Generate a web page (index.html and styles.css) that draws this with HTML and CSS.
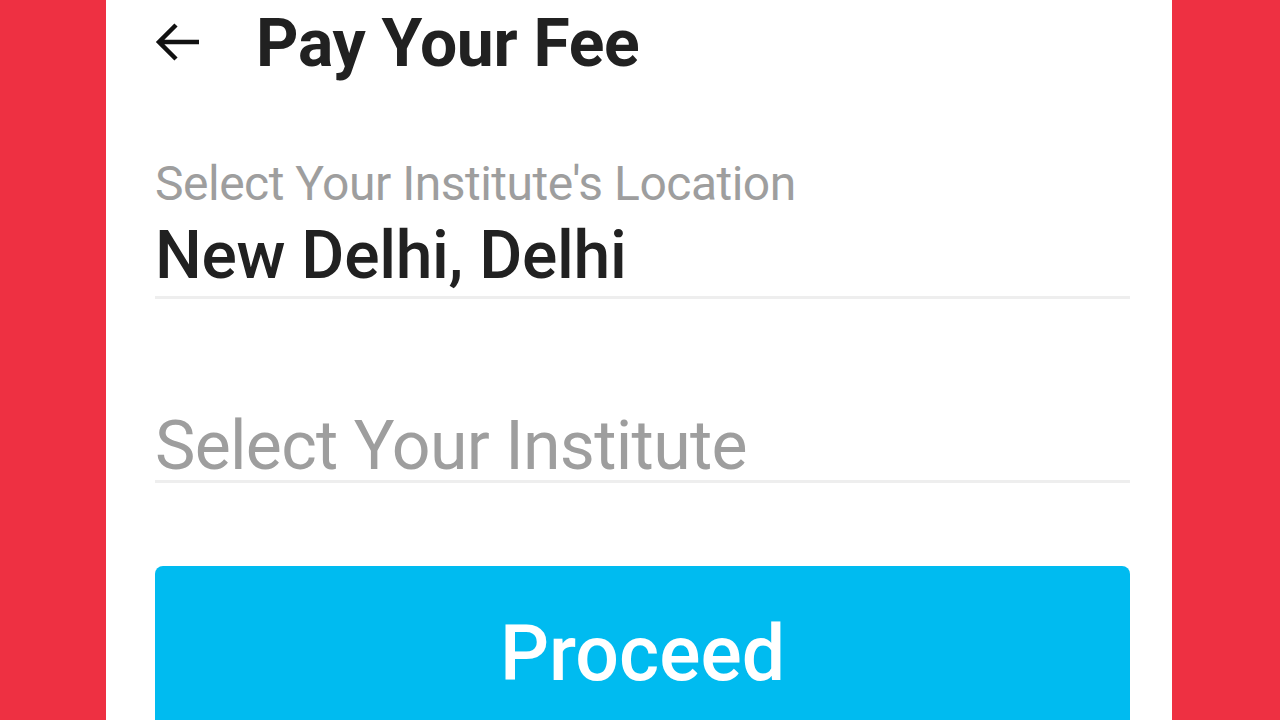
FILE: index.html
```html
<!DOCTYPE html>
<html>
    <head>
        <meta charset="utf-8">
        <title>Pay Your Fee</title>
        <link rel="stylesheet" href="styles.css">
    </head>
    <body>
        <main class="screen">
            <header class="topbar">
                <svg class="back" viewBox="0 0 46 40" width="46" height="40"><path d="M44 20H4M21 3L4 20l17 17"/></svg>
                <h1>Pay Your Fee</h1>
            </header>
            <div class="field">
                <label>Select Your Institute's Location</label>
                <div class="value">New Delhi, Delhi</div>
            </div>
            <div class="field empty">
                <div class="placeholder">Select Your Institute</div>
            </div>
            <button class="proceed">Proceed</button>
        </main>
    </body>
</html>
```

FILE: styles.css
```css
html {background:#ee3042;}
body {margin:0;padding:0;font-family:Roboto, "Noto Sans", sans-serif;color:#212121;}
.screen {width:1066px;height:720px;margin-left:106px;background:#fff;padding:0 42px 0 49px;box-sizing:border-box;overflow:hidden;display:flex;flex-direction:column;}
.screen > * {flex:none;}
.topbar {display:flex;align-items:center;height:84px;}
.topbar .back {fill:none;stroke:#111;stroke-width:4.5;margin-left:0;}
.topbar h1 {margin:2px 0 0 55px;font-size:66px;font-weight:700;letter-spacing:-0.3px;}
.field {border-bottom:3px solid #eeeeee;}
.field label {display:block;margin-top:73px;font-size:48px;color:#9e9e9e;line-height:54px;letter-spacing:-0.5px;}
.field .value {margin-top:5px;font-size:66px;font-weight:500;line-height:80px;letter-spacing:-0.3px;}
.field.empty {margin-top:113px;}
.placeholder {font-size:68px;color:#9e9e9e;line-height:68px;letter-spacing:-0.7px;}
.proceed {margin-top:83px;height:180px;border:none;border-radius:8px;background:#00bbf0;color:#fff;font-family:inherit;font-size:77px;font-weight:500;padding:0 0 4px;}
```
